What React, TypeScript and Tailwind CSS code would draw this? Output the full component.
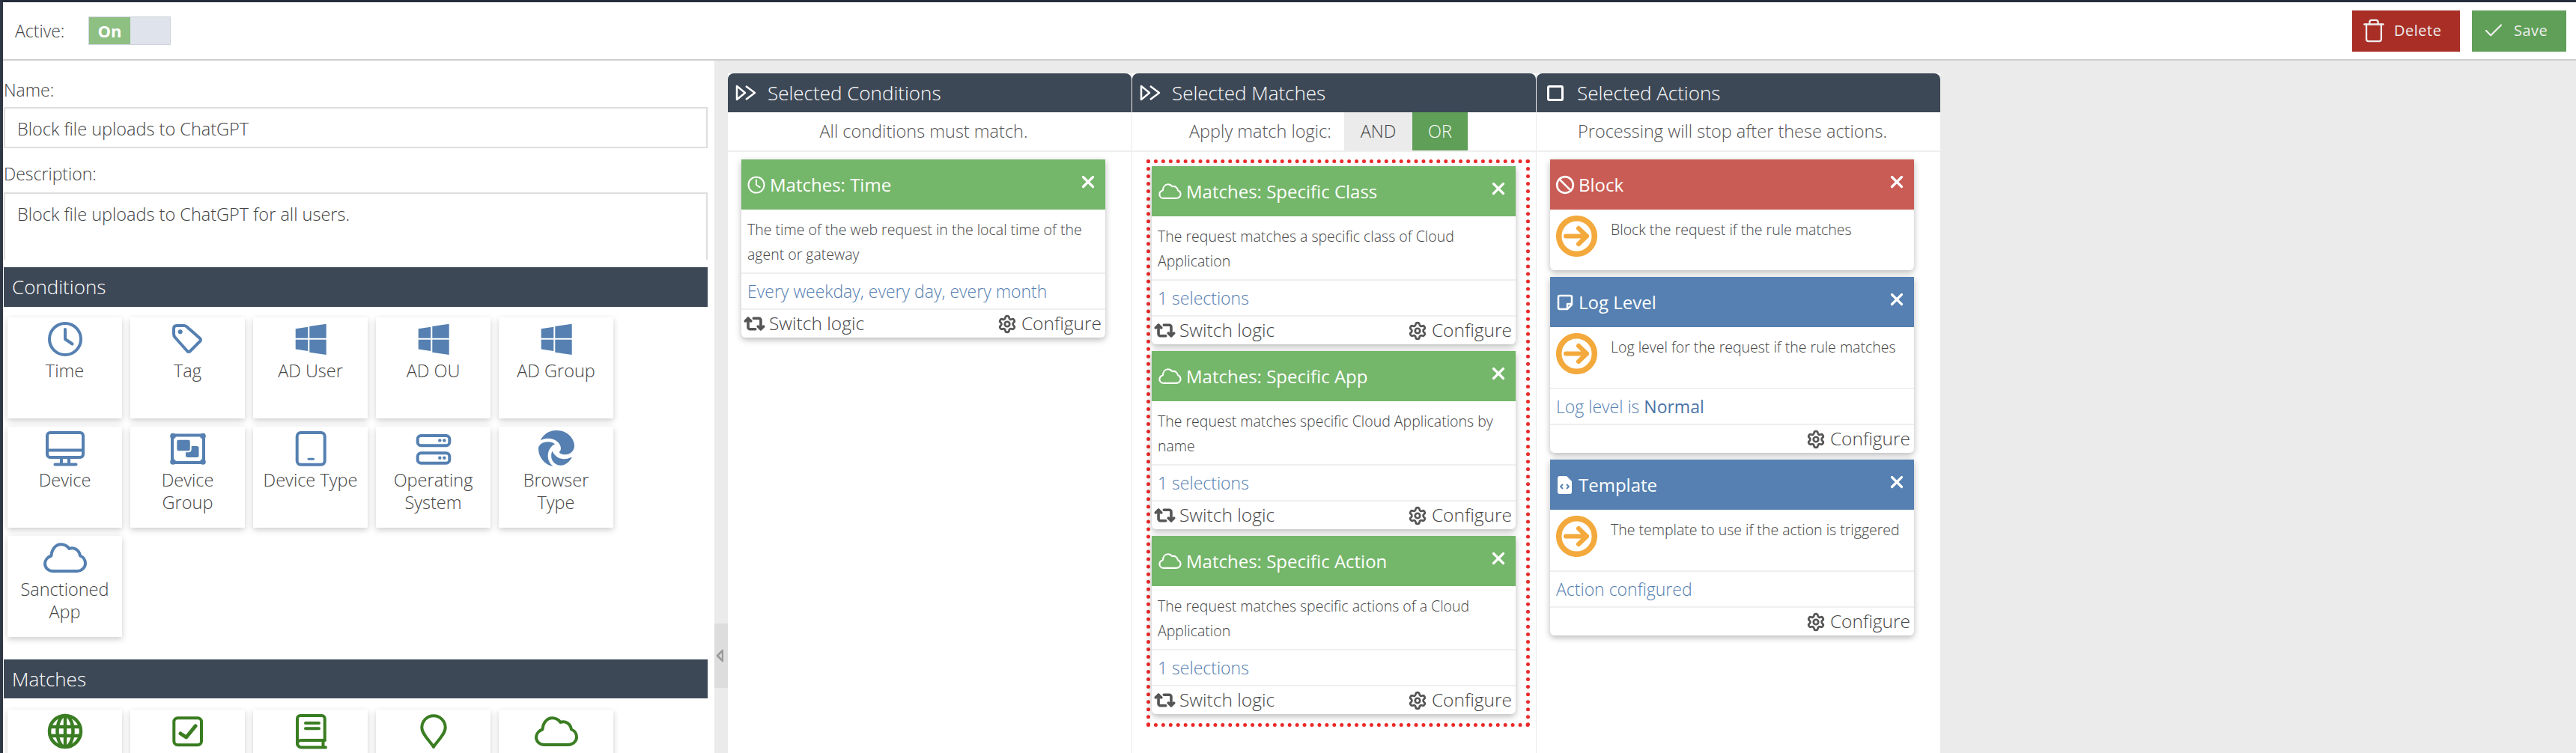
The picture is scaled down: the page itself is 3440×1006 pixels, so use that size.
import type { ReactNode } from "react";
import { Ban, Check, Repeat2, Settings, Trash, X } from "lucide-react";
import { FaEdge } from "react-icons/fa6";

const BLUE = "#5580b1";
const GREEN = "#3a7d22";

type GlyphProps = { c: string };

function Glyph({ children, size = 48 }: { children: ReactNode; size?: number }) {
  return (
    <svg viewBox="0 0 48 48" width={size} height={size} fill="none" className="shrink-0 overflow-visible">
      {children}
    </svg>
  );
}

const Clock = ({ c }: GlyphProps) => (
  <g stroke={c} strokeWidth="4" strokeLinecap="round" strokeLinejoin="round">
    <circle cx="24" cy="24" r="21" />
    <path d="M24 11v13l9.5 6.5" />
  </g>
);

const Tag = ({ c }: GlyphProps) => (
  <g>
    <path
      d="M9 6h10q2 0 4 2l17 15q2 2 0 4L27 40q-2 2-4 0L7 22q-2-2-2-5v-7q0-4 4-4z"
      stroke={c}
      strokeWidth="4"
      strokeLinejoin="round"
    />
    <circle cx="13.7" cy="14.3" r="3" fill={c} />
  </g>
);

const Windows = ({ c }: GlyphProps) => (
  <g fill={c}>
    <path d="M3.7 10.3 20.3 7.7v15H3.7z" />
    <path d="M22.3 7 44.7 3.7v19H22.3z" />
    <path d="M3.7 24.7h16.6V40L3.7 37.5z" />
    <path d="M22.3 24.7h22.4V45l-22.4-3.3z" />
  </g>
);

const Monitor = ({ c }: GlyphProps) => (
  <g stroke={c} strokeWidth="4" strokeLinecap="round" strokeLinejoin="round">
    <rect x="0" y="3" width="48" height="33" rx="4" />
    <path d="M0 26.5h48M19 37v8M29 37v8M10.5 45.5h28" />
  </g>
);

const DeviceGroup = ({ c }: GlyphProps) => (
  <g>
    <rect x="3" y="6.5" width="42" height="36.5" stroke={c} strokeWidth="4" />
    <circle cx="4" cy="7.5" r="3.8" fill={c} />
    <circle cx="44" cy="7.5" r="3.8" fill={c} />
    <circle cx="4" cy="42" r="3.8" fill={c} />
    <circle cx="44" cy="42" r="3.8" fill={c} />
    <rect x="21" y="21" width="17.5" height="15" rx="2.5" fill={c} />
    <rect x="8.3" y="11.7" width="19.4" height="16.6" rx="3" fill={c} stroke="#fff" strokeWidth="2" />
  </g>
);

const Tablet = ({ c }: GlyphProps) => (
  <g stroke={c} strokeLinecap="round">
    <rect x="5.7" y="3" width="37" height="42.7" rx="5" strokeWidth="4" />
    <path d="M21 38.3h6.5" strokeWidth="3" />
  </g>
);

const Server = ({ c }: GlyphProps) => (
  <g>
    <rect x="2.7" y="7" width="42.6" height="13.2" rx="4.5" stroke={c} strokeWidth="4" />
    <rect x="2.7" y="30.3" width="42.6" height="13.4" rx="4.5" stroke={c} strokeWidth="4" />
    <circle cx="32.3" cy="13.4" r="2.2" fill={c} />
    <circle cx="38.3" cy="13.4" r="2.2" fill={c} />
    <circle cx="32.3" cy="36.8" r="2.2" fill={c} />
    <circle cx="38.3" cy="36.8" r="2.2" fill={c} />
  </g>
);

const Cloud = ({ c }: GlyphProps) => (
  <path
    d="M8 42C1 42-3 37-3 32c0-5 4-9 8.500-10.500C6 13 11 6.300 18.500 6.300c4.500 0 8.500 2.200 11 5.700C36 9.500 43 14 44 21.500c4 1.500 7 5.500 7 10.500 0 5-5 10-11 10z"
    stroke={c}
    strokeWidth="4"
    strokeLinejoin="round"
  />
);

const Globe = ({ c }: GlyphProps) => (
  <g stroke={c} strokeWidth="4.500">
    <circle cx="24" cy="24" r="21" />
    <ellipse cx="24" cy="24" rx="10.500" ry="21" />
    <path d="M24 3v42M5 18h38M5 30h38" />
  </g>
);

const CheckBox = ({ c }: GlyphProps) => (
  <g stroke={c} strokeLinecap="round" strokeLinejoin="round">
    <rect x="5.300" y="6.300" width="36.700" height="36" rx="5" strokeWidth="4" />
    <path d="m14 27 7.700 5L34 17" strokeWidth="5" />
  </g>
);

const Book = ({ c }: GlyphProps) => (
  <g stroke={c} strokeWidth="4" strokeLinecap="round" strokeLinejoin="round">
    <path d="M42.700 36V7a4 4 0 0 0-4-4H10a4 4 0 0 0-4 4v33a5.500 5.500 0 0 0 5.500 5.500H44" />
    <path d="M6 41a5 5 0 0 1 5-5h31.700M40.500 36v9" />
    <path d="M17 13h18M17 20.300h18" />
  </g>
);

const Pin = ({ c }: GlyphProps) => (
  <path
    d="M24 45C20 38 8.300 28 8.300 19a15.700 15.700 0 0 1 31.400 0C39.700 28 28 38 24 45z"
    stroke={c}
    strokeWidth="4"
    strokeLinejoin="round"
  />
);

const Edge = () => <FaEdge size={48} color={BLUE} />;

function Tile({ icon, label }: { icon: ReactNode; label?: ReactNode }) {
  return (
    <div className="h-[135px] bg-white rounded-[1px] shadow-[0_3px_8px_rgba(0,0,0,0.2)] flex flex-col items-center pt-[5px]">
      {icon}
      {label && (
        <div className="mt-[3px] text-center text-[23.5px] leading-[30px] font-light text-[#444] whitespace-nowrap">{label}</div>
      )}
    </div>
  );
}

const conditions: { icon: ReactNode; label: ReactNode }[] = [
  { icon: <Glyph><Clock c={BLUE} /></Glyph>, label: "Time" },
  { icon: <Glyph><Tag c={BLUE} /></Glyph>, label: "Tag" },
  { icon: <Glyph><Windows c={BLUE} /></Glyph>, label: "AD User" },
  { icon: <Glyph><Windows c={BLUE} /></Glyph>, label: "AD OU" },
  { icon: <Glyph><Windows c={BLUE} /></Glyph>, label: "AD Group" },
  { icon: <Glyph><Monitor c={BLUE} /></Glyph>, label: "Device" },
  { icon: <Glyph><DeviceGroup c={BLUE} /></Glyph>, label: <>Device<br />Group</> },
  { icon: <Glyph><Tablet c={BLUE} /></Glyph>, label: "Device Type" },
  { icon: <Glyph><Server c={BLUE} /></Glyph>, label: <>Operating<br />System</> },
  { icon: <Edge />, label: <>Browser<br />Type</> },
  { icon: <Glyph><Cloud c={BLUE} /></Glyph>, label: <>Sanctioned<br />App</> },
];

const matches: ReactNode[] = [
  <Glyph><Globe c={GREEN} /></Glyph>,
  <Glyph><CheckBox c={GREEN} /></Glyph>,
  <Glyph><Book c={GREEN} /></Glyph>,
  <Glyph><Pin c={GREEN} /></Glyph>,
  <Glyph><Cloud c={GREEN} /></Glyph>,
];

function ArrowCircle() {
  return (
    <svg viewBox="0 0 55 55" width={55} height={55} fill="none" className="shrink-0">
      <circle cx="27.500" cy="27.500" r="23.800" stroke="#f3a93c" strokeWidth="7.500" />
      <path d="M13 27.500h28M30 17l11 10.500L30 38" stroke="#f3a93c" strokeWidth="6" strokeLinecap="round" strokeLinejoin="round" />
    </svg>
  );
}

function FooterBar({ switchLogic }: { switchLogic: boolean }) {
  return (
    <div className="h-[39px] border-t-2 border-[#efefef] pl-[3px] pr-[5px] flex items-center justify-between text-[24.5px] font-light text-[#444]">
      {switchLogic ? (
        <span className="flex items-center gap-[5px]">
          <Repeat2 size={29} strokeWidth={3} className="text-[#555]" />
          Switch logic
        </span>
      ) : (
        <span />
      )}
      <span className="flex items-center gap-[6px]">
        <Settings size={26} strokeWidth={2.5} className="text-[#555]" />
        Configure
      </span>
    </div>
  );
}

type CardProps = {
  icon: ReactNode;
  title: string;
  color: string;
  children: ReactNode;
  sel?: ReactNode;
  foot?: boolean;
  switchLogic?: boolean;
  tall?: boolean;
};

function Card({ icon, title, color, children, sel, foot = false, switchLogic = false, tall = false }: CardProps) {
  return (
    <div className="w-[486px] shrink-0 rounded-b-md bg-white shadow-[0_3px_9px_rgba(0,0,0,0.28)]">
      <div className={`h-[67px] ${color} pl-[8px] pr-[10px] flex items-center text-white`}>
        <span className="min-w-[24px] flex justify-center">{icon}</span>
        <span className="ml-[6px] flex-1 text-[24px] leading-none">{title}</span>
        <X size={26} strokeWidth={3} className="mb-[8px]" />
      </div>
      <div className={`${tall ? "h-[84px]" : "h-[81px]"} text-[#444] font-light text-[19.5px]`}>{children}</div>
      {sel && (
        <div className="h-[48px] text-[23px] border-t-2 border-[#efefef] pl-[8px] flex items-center font-light text-[#5580b1]">
          {sel}
        </div>
      )}
      {foot && <FooterBar switchLogic={switchLogic} />}
    </div>
  );
}

const HeadClock = () => <Glyph size={24}><Clock c="#fff" /></Glyph>;
const HeadCloud = () => (
  <span className="ml-[4px] mr-[3px]">
    <Glyph size={25}><Cloud c="#fff" /></Glyph>
  </span>
);

function Sticky() {
  return (
    <svg viewBox="0 0 22 22" width={22} height={22} fill="none" stroke="#fff" strokeWidth="2.500" strokeLinejoin="round">
      <path d="M4 2h14a2 2 0 0 1 2 2v10l-6 6H4a2 2 0 0 1-2-2V4a2 2 0 0 1 2-2z" />
      <path d="M20 13h-6v7" />
    </svg>
  );
}

function FileCode() {
  return (
    <svg viewBox="0 0 20 24" width={20} height={24}>
      <path d="M3 0h9l7 7v14a3 3 0 0 1-3 3H3a3 3 0 0 1-3-3V3a3 3 0 0 1 3-3z" fill="#fff" />
      <path d="M7 11l-3 3 3 3M12 11l3 3-3 3" fill="none" stroke="#5580b1" strokeWidth="1.800" />
    </svg>
  );
}

function PanelHead({ icon, title }: { icon: ReactNode; title: string }) {
  return (
    <div className="h-[52px] shrink-0 rounded-t-lg bg-[#3d4856] flex items-center text-white text-[26px] font-light">
      {icon}
      {title}
    </div>
  );
}

function DoublePlay() {
  return (
    <svg viewBox="0 0 30 22" width={30} height={22} fill="none" stroke="#fff" strokeWidth="2.500" strokeLinejoin="round" className="ml-[10px] mr-[13px]">
      <path d="M2 2v18l11-9z" />
      <path d="M14 2l12 9-12 9" />
    </svg>
  );
}

function SectionHead({ title, h }: { title: string; h: string }) {
  return (
    <div className={`${h} ml-px bg-[#3d4856] pl-[11px] flex items-center text-[26px] font-light text-white`}>{title}</div>
  );
}

function Desc({ text }: { text: ReactNode }) {
  return <div className="pt-[10px] leading-[33px] px-[8px]">{text}</div>;
}

function ActionBody({ text }: { text: string }) {
  return (
    <div className="h-full pl-[8px] pt-[8px] flex items-start">
      <ArrowCircle />
      <div className="ml-[18px] mt-[2px] leading-[33px] whitespace-nowrap">{text}</div>
    </div>
  );
}

export default function App() {
  return (
    <div className="h-[1006px] w-[3440px] overflow-hidden bg-[#ebebeb] font-['Open_Sans',sans-serif] border-t-[3px] border-l-4 border-t-[#232c3a] border-l-[#2f3844] flex flex-col">
      {/* top bar */}
      <div className="h-[78px] shrink-0 bg-white border-b-2 border-[#cfcfcf] flex items-center pl-[16px] pr-[13px]">
        <span className="text-[23px] font-light text-[#444] w-[98px]">Active:</span>
        <div className="flex h-[38px] w-[110px] border border-[#cfd3da] bg-[#dee3ec]">
          <div className="w-[55px] bg-[#8ebf83] text-white font-bold text-[22px] flex items-center justify-center">On</div>
        </div>
        <div className="ml-auto flex gap-[16px]">
          <button className="h-[55px] w-[144px] bg-[#a82e26] text-[#efefef] text-[20px] flex items-center pl-[12px]">
            <Trash size={34} strokeWidth={1.600} />
            <span className="ml-[10px] tracking-[0.5px]">Delete</span>
          </button>
          <button className="h-[55px] w-[126px] bg-[#5f9f57] text-[#efefef] text-[20px] flex items-center pl-[14px]">
            <Check size={30} strokeWidth={1.800} />
            <span className="ml-[12px] tracking-[0.5px]">Save</span>
          </button>
        </div>
      </div>

      <div className="flex-1 min-h-0 flex">
        {/* left form */}
        <div className="w-[950px] shrink-0 bg-white pr-[9px] overflow-hidden">
          <div className="ml-px mt-[27px] h-[25px] text-[23px] leading-[25px] font-light text-[#444]">Name:</div>
          <div className="ml-px mt-[10px] h-[55px] border-2 border-[#dedede] pl-[16px] text-[23.5px] leading-[54px] font-light text-[#444]">
            Block file uploads to ChatGPT
          </div>
          <div className="ml-px mt-[22px] h-[25px] text-[23px] leading-[25px] font-light text-[#444]">Description:</div>
          <div className="ml-px mt-[12px] h-[90px] border-2 border-b-0 border-[#dedede] pl-[16px] text-[23.5px] leading-[54px] font-light text-[#444]">
            Block file uploads to ChatGPT for all users.
          </div>
          <div className="mt-[10px]">
            <SectionHead title="Conditions" h="h-[53px]" />
          </div>
          <div className="ml-[6px] mt-[14px] grid grid-cols-[repeat(5,153px)] gap-[11px]">
            {conditions.map((t, i) => (
              <Tile key={i} icon={t.icon} label={t.label} />
            ))}
          </div>
          <div className="mt-[30px]">
            <SectionHead title="Matches" h="h-[52px]" />
          </div>
          <div className="ml-[6px] mt-[15px] grid grid-cols-[repeat(5,153px)] gap-[11px]">
            {matches.map((m, i) => (
              <Tile key={i} icon={m} />
            ))}
          </div>
        </div>

        {/* splitter */}
        <div className="w-[18px] shrink-0">
          <div className="h-[86px] mt-[752px] bg-[#dddddd] flex items-center pl-[2px]">
            <svg viewBox="0 0 10 18" width={10} height={18} fill="none" stroke="#999" strokeWidth="2.500" strokeLinejoin="round">
              <path d="M9 2v14L2 9z" />
            </svg>
          </div>
        </div>

        {/* selected columns */}
        <div className="pt-[17px] flex items-stretch">
          {/* conditions */}
          <div className="w-[540px] border-r border-[#ebebeb] bg-white flex flex-col">
            <PanelHead icon={<DoublePlay />} title="Selected Conditions" />
            <div className="h-[53px] shrink-0 border-b-2 border-[#efefef] pr-[16px] flex items-center justify-center text-[23.5px] font-light text-[#555]">
              All conditions must match.
            </div>
            <div className="pl-[18px] pt-[10px]">
              <Card
                icon={<HeadClock />}
                title="Matches: Time"
                color="bg-[#74b66a]"
                tall
                sel="Every weekday, every day, every month"
                foot
                switchLogic
              >
                <Desc text="The time of the web request in the local time of the agent or gateway" />
              </Card>
            </div>
          </div>

          {/* matches */}
          <div className="w-[540px] border-r border-[#ebebeb] bg-white flex flex-col">
            <PanelHead icon={<DoublePlay />} title="Selected Matches" />
            <div className="h-[53px] shrink-0 border-b-2 border-[#efefef] pl-[76px] flex items-stretch text-[23.5px] font-light text-[#555]">
              <span className="self-center w-[207px] whitespace-nowrap">Apply match logic:</span>
              <span className="w-[91px] bg-[#ebebeb] flex items-center justify-center text-[#444]">AND</span>
              <span className="w-[74px] bg-[#5f9f57] flex items-center justify-center text-white">OR</span>
            </div>
            <div className="ml-[19px] mt-[10px] w-[512px] h-[758px] shrink-0 border-[5px] border-dotted border-[#ea2a2a] pl-[2px] pt-[4px] flex flex-col gap-[9px]">
              <Card
                icon={<HeadCloud />}
                title="Matches: Specific Class"
                color="bg-[#74b66a]"
                tall
                sel="1 selections"
                foot
                switchLogic
              >
                <Desc text="The request matches a specific class of Cloud Application" />
              </Card>
              <Card
                icon={<HeadCloud />}
                title="Matches: Specific App"
                color="bg-[#74b66a]"
                tall
                sel="1 selections"
                foot
                switchLogic
              >
                <Desc text="The request matches specific Cloud Applications by name" />
              </Card>
              <Card
                icon={<HeadCloud />}
                title="Matches: Specific Action"
                color="bg-[#74b66a]"
                tall
                sel="1 selections"
                foot
                switchLogic
              >
                <Desc text="The request matches specific actions of a Cloud Application" />
              </Card>
            </div>
          </div>

          {/* actions */}
          <div className="w-[539px] bg-white flex flex-col">
            <div className="h-[52px] shrink-0 rounded-t-lg bg-[#3d4856] flex items-center text-white text-[26px] font-light">
              <span className="ml-[14px] mr-[18px] h-[21px] w-[22px] rounded-[3px] border-[3px] border-white" />
              Selected Actions
            </div>
            <div className="h-[53px] shrink-0 border-b-2 border-[#efefef] pr-[16px] flex items-center justify-center text-[23.5px] font-light text-[#555]">
              Processing will stop after these actions.
            </div>
            <div className="pl-[18px] pt-[10px] flex flex-col gap-[9px]">
              <Card icon={<Ban size={26} strokeWidth={2.500} className="-mx-px" />} title="Block" color="bg-[#c95c55]">
                <ActionBody text="Block the request if the rule matches" />
              </Card>
              <Card
                icon={<Sticky />}
                title="Log Level"
                color="bg-[#5580b1]"
                sel={<>Log level is&nbsp;<span className="font-normal text-[#4a74a8]">Normal</span></>}
                foot
              >
                <ActionBody text="Log level for the request if the rule matches" />
              </Card>
              <Card
                icon={<FileCode />}
                title="Template"
                color="bg-[#5580b1]"
                sel="Action configured"
                foot
              >
                <ActionBody text="The template to use if the action is triggered" />
              </Card>
            </div>
          </div>
        </div>
      </div>
    </div>
  );
}
